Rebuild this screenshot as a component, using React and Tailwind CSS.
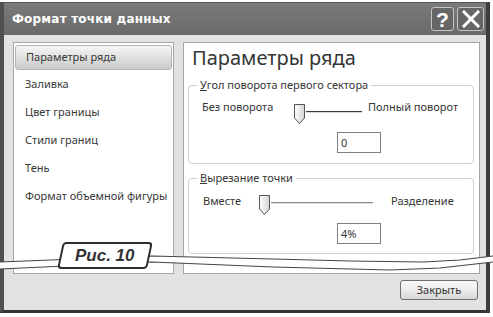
const ui = { fontFamily: '"Noto Sans", "Open Sans", sans-serif' };

function Thumb() {
  return (
    <svg width="13" height="22" viewBox="0 0 13 22" className="shrink-0">
      <defs>
        <linearGradient id="thumbFill" x1="0" y1="0" x2="1" y2="0">
          <stop offset="0" stopColor="#ffffff" />
          <stop offset="1" stopColor="#d4d4d4" />
        </linearGradient>
      </defs>
      <path
        d="M1.5 1.5 H11.5 V15 L6.5 20.5 L1.5 15 Z"
        fill="url(#thumbFill)"
        stroke="#555"
        strokeWidth="1"
        strokeLinejoin="round"
      />
    </svg>
  );
}

function NumberBox({ value }) {
  return (
    <div className="w-[44px] h-[21px] border border-[#808080] bg-white pl-[3px] text-[11px] leading-[19px] text-[#333]">
      {value}
    </div>
  );
}

const menu = [
  "Заливка",
  "Цвет границы",
  "Стили границ",
  "Тень",
  "Формат объемной фигуры",
];

export default function App() {
  return (
    <div className="relative w-[493px] h-[317px] bg-white overflow-hidden" style={ui}>
      {/* window */}
      <div className="mt-[2px] w-[490px] h-[311px] flex flex-col border-t border-l-4 border-r-4 border-b-[3px] border-t-[#555] border-l-[#505050] border-r-[#3c3c3c] border-b-[#353535]">
        {/* title bar */}
        <div className="h-[32px] shrink-0 flex items-center justify-between pl-[8px] pr-[2px] bg-linear-to-b from-[#7a7a7a] to-[#6a6a6a]">
          <span
            className="text-white font-bold text-[12px] tracking-[0.2px]"
            style={{ fontFamily: '"DejaVu Sans", sans-serif' }}
          >
            Формат точки данных
          </span>
          <div className="flex gap-[3px] self-start mt-[4px]">
            <div className="w-[23px] h-[24px] border border-[#c4c4c4] rounded-[3px] bg-[#666] flex items-center justify-center">
              <span
                className="text-white font-bold text-[21px] leading-none"
                style={{ fontFamily: '"Liberation Sans", sans-serif' }}
              >
                ?
              </span>
            </div>
            <div className="w-[27px] h-[24px] border border-[#c4c4c4] rounded-[3px] bg-[#666] flex items-center justify-center">
              <svg width="18" height="18" viewBox="0 0 18 18">
                <path d="M2 2 L16 16 M16 2 L2 16" stroke="#fff" strokeWidth="3" strokeLinecap="square" />
              </svg>
            </div>
          </div>
        </div>

        {/* body */}
        <div className="flex-1 flex flex-col bg-[#e2e2e2] pt-[7px]">
          <div className="h-[232px] flex gap-[9px] pl-[9px] pr-[6px]">
            {/* left list */}
            <div className="w-[161px] border border-[#a6a6a6] bg-white pt-[2px] px-px text-[11px] text-[#383838]">
              <div className="h-[25px] flex items-center pl-[10px] rounded-[3px] border border-[#b4b4b4] bg-linear-to-b from-[#f6f6f6] via-[#e0e0e0] to-[#cacaca]">
                Параметры ряда
              </div>
              {menu.map((m) => (
                <div key={m} className="h-[28px] flex items-center pl-[10px] whitespace-nowrap">
                  {m}
                </div>
              ))}
            </div>

            {/* right pane */}
            <div className="flex-1 border border-[#a6a6a6] bg-white pt-[3px] text-[#353535]">
              <div className="pl-[8px] h-[24px] text-[20px] leading-[24px]">Параметры ряда</div>

              <fieldset className="mt-[8px] ml-[4px] mr-[5px] border border-[#cfcfcf] rounded-[4px] pb-[10px]">
                <legend className="ml-[8px] px-[3px] text-[11px] leading-[14px]">
                  <span className="underline">У</span>гол поворота первого сектора
                </legend>
                <div className="mt-[7px] pl-[13px] flex items-start text-[11px] leading-[16px]">
                  <span className="w-[91px] whitespace-nowrap">Без поворота</span>
                  <div className="mt-[4px]">
                    <Thumb />
                  </div>
                  <div className="mt-[12px] w-[56px] h-[2px] border-t border-[#3a3a3a] border-b border-b-[#d8d8d8]" />
                  <span className="ml-[6px] whitespace-nowrap">Полный поворот</span>
                </div>
                <div className="mt-[7px] ml-[148px]">
                  <NumberBox value="0" />
                </div>
              </fieldset>

              <fieldset className="mt-[7px] ml-[4px] mr-[5px] border border-[#cfcfcf] rounded-[4px] pb-[9px]">
                <legend className="ml-[8px] px-[3px] text-[11px] leading-[14px]">
                  <span className="underline">В</span>ырезание точки
                </legend>
                <div className="mt-[8px] pl-[14px] flex items-start text-[11px] leading-[16px]">
                  <span className="w-[55px] whitespace-nowrap">Вместе</span>
                  <div className="mt-px">
                    <Thumb />
                  </div>
                  <div className="mt-[9px] w-[102px] h-[2px] border-t border-[#8a8a8a] border-b border-b-[#e0e0e0]" />
                  <span className="ml-[18px] whitespace-nowrap">Разделение</span>
                </div>
                <div className="mt-[7px] ml-[148px]">
                  <NumberBox value="4%" />
                </div>
              </fieldset>
            </div>
          </div>

          {/* bottom bar */}
          <div className="flex-1 flex justify-end items-start pt-[6px] pr-[8px]">
            <button className="w-[78px] h-[20px] rounded-[3px] border border-[#6f6f6f] bg-linear-to-b from-[#fafafa] via-[#ececec] to-[#d6d6d6] text-[11px] leading-[18px] text-[#333]">
              Закрыть
            </button>
          </div>
        </div>
      </div>

      {/* torn cut across the picture */}
      <svg className="absolute inset-0 pointer-events-none" width="493" height="317" viewBox="0 0 493 317">
        <path
          d="M0 262 L152 256 L273 259 L350 261 L423 262 L460 260 L493 256 L493 262 L440 268 L390 270 L273 267 L152 262 L0 269 Z"
          fill="#fff"
        />
        <path d="M0 262 L152 256 L273 259 L350 261 L423 262 L460 260 L493 256" fill="none" stroke="#444" strokeWidth="1.2" />
        <path d="M0 269 L152 262 L273 267 L390 270 L440 268 L493 262" fill="none" stroke="#444" strokeWidth="1.2" />
      </svg>

      {/* figure caption */}
      <div className="absolute left-[60px] top-[242px] w-[90px] h-[27px] -skew-x-12 border-2 border-[#2e2e2e] rounded-[4px] bg-white flex items-center justify-center">
        <span
          className="skew-x-12 font-bold italic text-[17px] leading-none text-[#333]"
          style={{ fontFamily: '"Liberation Sans", Arial, sans-serif' }}
        >
          Рис. 10
        </span>
      </div>
    </div>
  );
}
